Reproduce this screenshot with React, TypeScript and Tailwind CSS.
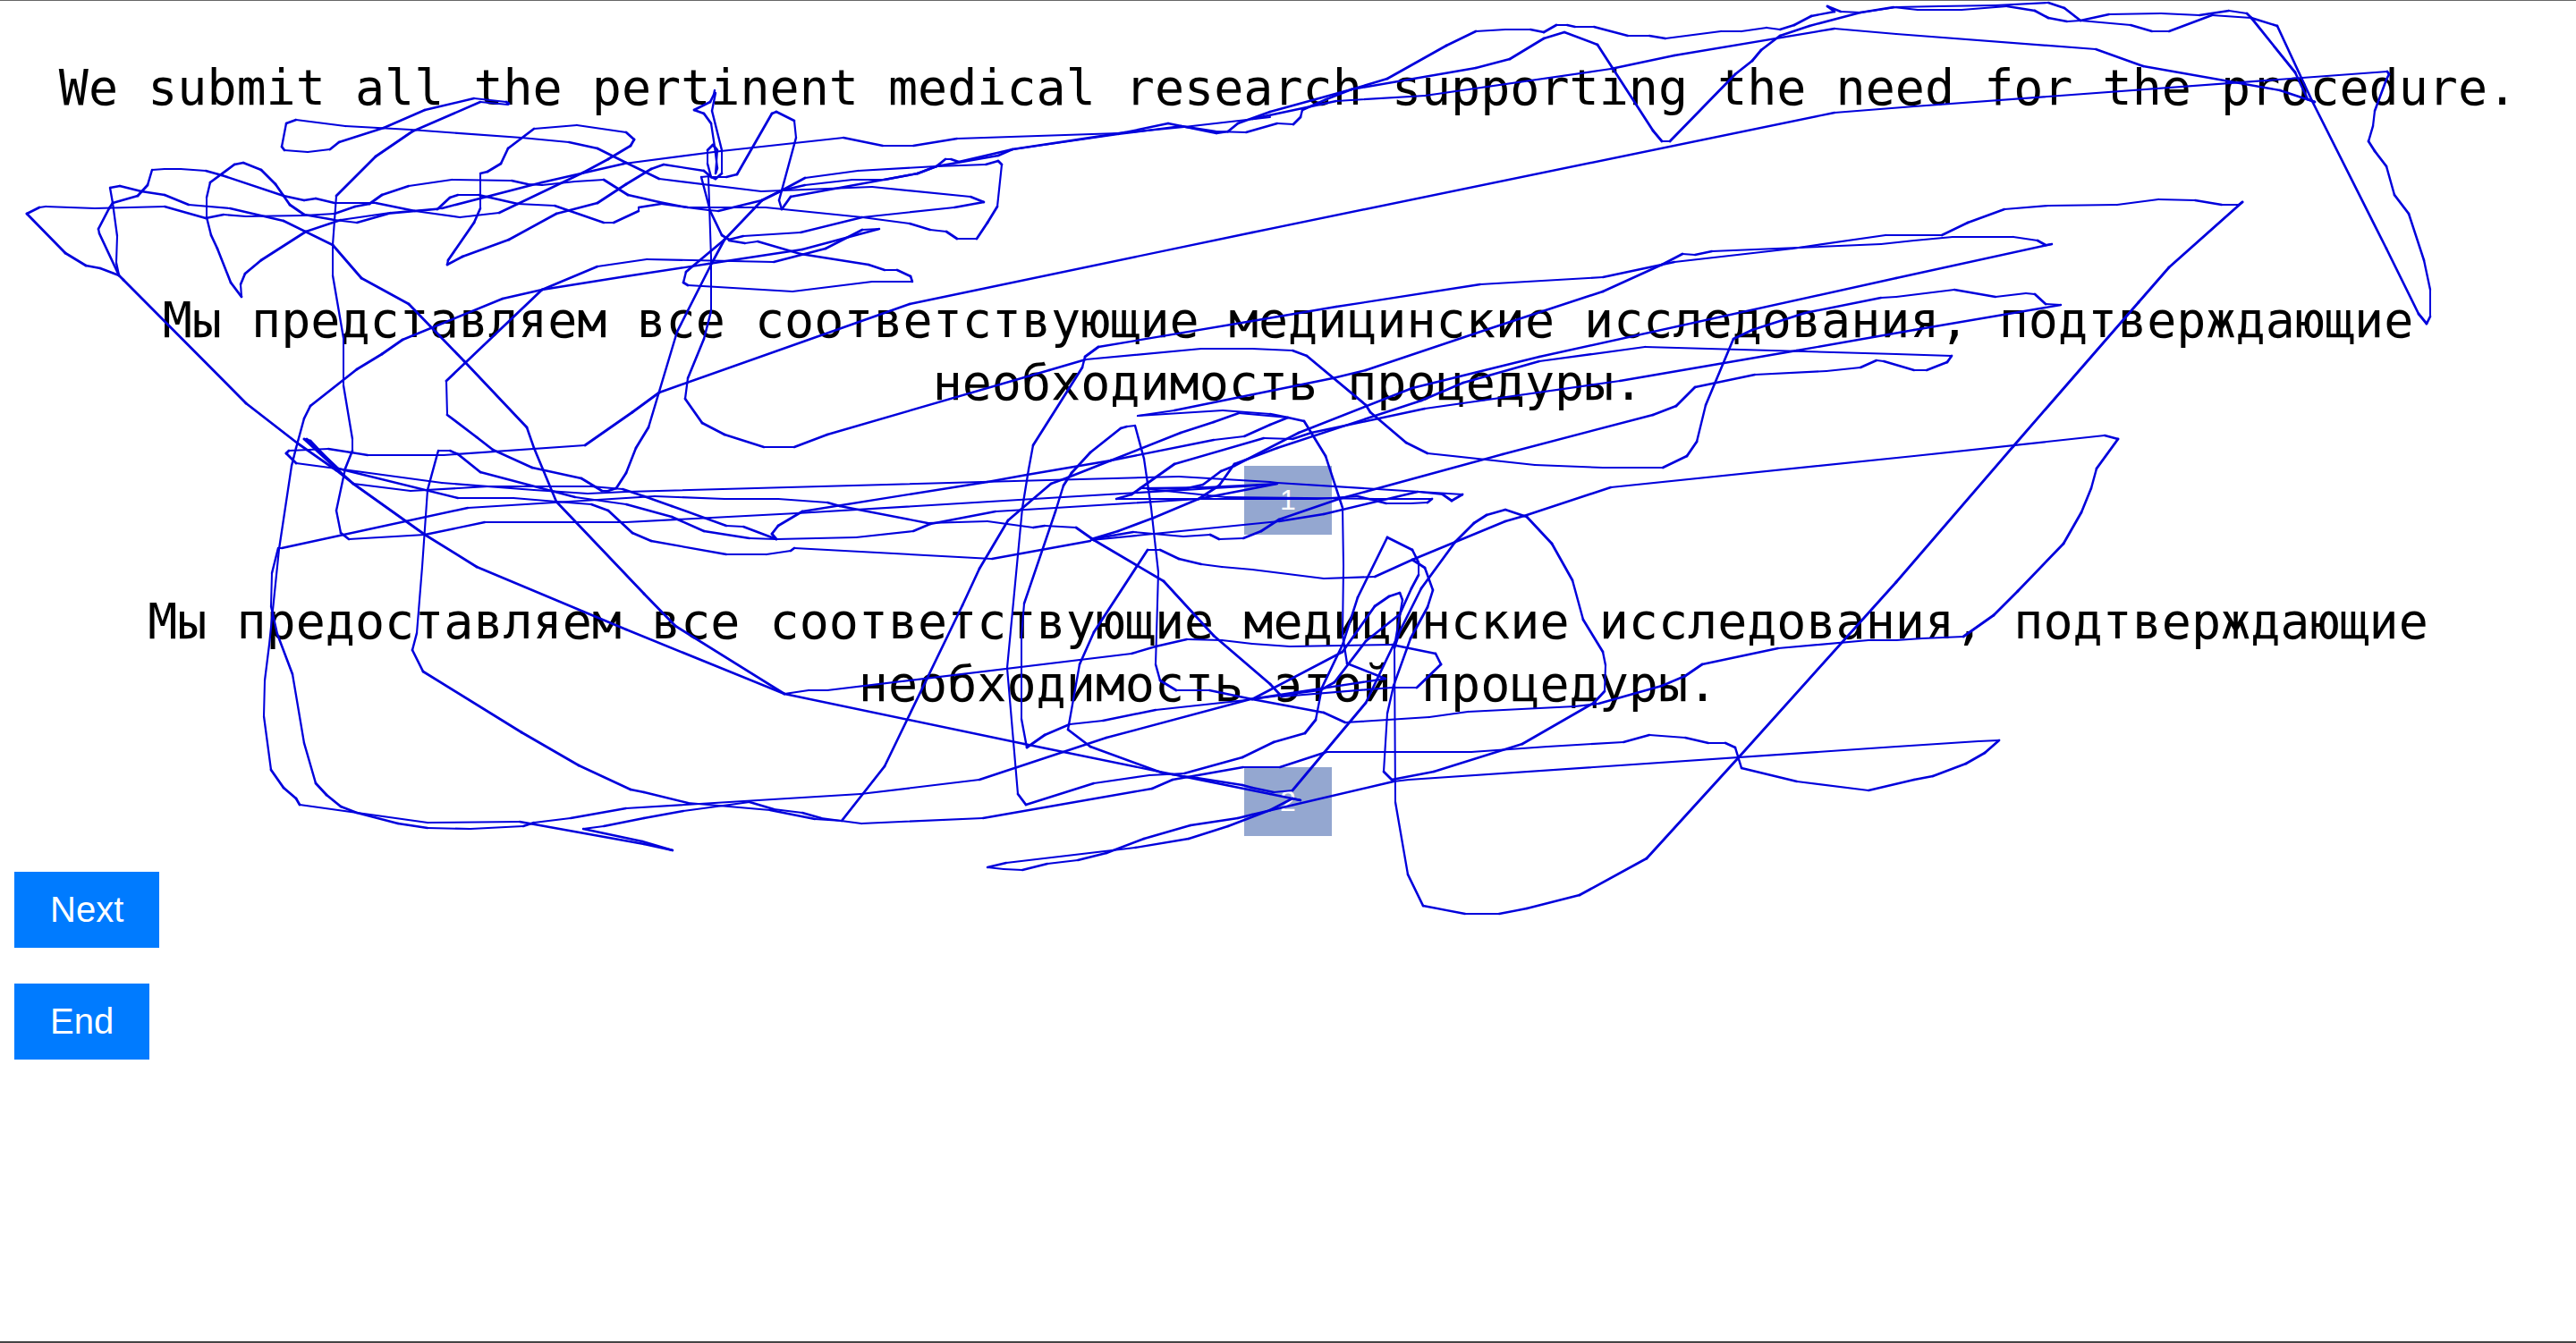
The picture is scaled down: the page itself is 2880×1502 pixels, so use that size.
const strokes: string[] = [
  "569,115 566,113 530,109 475,122 429,142 379,158 369,166 344,169 318,167 315,163 320,137 331,133 386,140 459,144 583,153 636,158 668,165 700,181 737,199 851,213 975,208 1085,219 1100,225 1067,231 964,242 895,259 831,263 815,267 807,262 794,235 784,197 794,196",
  "1047,185 1026,193 884,219 874,233 871,223 890,153 888,134 868,124 863,126 824,194 812,197 795,197 787,190 742,183 728,188 700,205 668,226 622,238 569,267 517,286 500,295 501,290 530,248 537,232 537,193 545,191 560,182 568,165 597,143 645,139 700,147 709,155 705,162 680,177 652,192 558,237 514,242 464,235 420,226 374,226 353,221 340,223 317,218 248,195 230,190 202,188 184,188 170,189 165,206 154,218 126,226 122,232 110,255 111,260 133,307 112,299 96,296 73,282 30,238 44,231 51,230 106,232 184,230 230,243 250,239 275,241 340,240 374,238 397,230 413,227 427,217 457,207 505,200 572,201 590,205 606,206 643,202 675,200 702,217 737,225 769,231 856,231 964,242 1017,249 1040,256 1058,258 1070,266 1092,266 1104,248 1115,230 1120,183 1116,179 1102,183 1047,185 959,190 900,198 874,212 852,223 810,267 767,303 764,315 769,318 886,325 975,314 1020,314 1018,308 1003,301 989,301 971,295 895,283 847,269 833,271 815,268",
  "133,307 130,293 131,263 126,226 123,209 134,207 158,213 184,217 211,228 257,232 317,246 372,273 404,310 457,339 519,403 589,477 597,500 622,560 720,663 755,699 877,775 904,771 925,771 1265,730 1292,722 1327,714 1366,715 1400,719 1442,722 1556,720 1605,730 1611,742 1584,768 1556,768 1433,778",
  "133,307 138,312 275,450 333,495 376,525 395,540 475,597 533,633 700,703 877,775 1145,831 1311,865 1420,887 1454,894",
  "340,490 347,492 376,523 395,540 459,548 546,543 661,543 696,546 720,554 751,565 812,587 831,588 868,602",
  "340,490 376,523 494,539 597,547 657,551 700,549 1134,537 1318,532 1420,538 1428,539 1635,552 1623,559 1613,552 1585,549 1480,574 1430,582 1220,603",
  "343,490 378,523 512,556 574,556 622,560 661,563 680,570 707,595 728,604 812,619 857,619 884,615 888,612 1109,624 1219,604",
  "376,523 331,517 320,506 323,503 367,501 411,508 496,508 654,497 707,460 737,438 1017,339 1400,259 2051,125 2140,118 2669,79 2671,82 2668,88 2655,123 2653,140 2648,157 2655,168 2668,185 2677,217 2693,238 2710,290 2717,323 2717,353 2713,361 2704,350 2668,277 2585,112 2546,28 2517,19 2473,16 2425,34 2406,34 2382,27 2326,22 2308,8 2290,2 2231,5 2168,6 2120,7 2080,13 2023,28 1990,39 1969,55 1959,67 1940,82 1867,157 1858,157 1848,145 1786,49 1749,35 1726,42 1688,65 1650,75 1511,99 1420,124 1384,137 1373,146 1360,148 1306,137 1258,147 1132,166 1072,180 1063,177 1057,177 1047,185",
  "1420,130 1324,141 1251,148 1070,154 1021,162 987,162 943,153 806,168 698,182 606,203 494,232 436,237 381,245 342,258 292,290 274,305 269,317 270,331 258,315 243,277 236,262 231,242 231,220 235,203 262,183 272,181 292,189 308,205 324,228 340,239 374,245 399,248 434,238 489,233 503,220 512,217 535,217 579,227 620,229 675,248 686,248 714,235 714,231 739,227 792,234 803,235 852,223 874,212 900,206 953,200 989,200 1026,193 1047,185 1116,173 1132,166 1251,149 1320,140 1359,146 1393,147 1428,137 1446,138 1454,130 1456,122 1483,110 1511,99 1551,87 1617,50 1650,34 1683,32 1711,32 1726,35 1740,27 1752,27 1761,29 1782,29 1820,39 1844,39 1862,42 1924,34 1947,34 1975,30 1990,32 2006,27 2025,17 2051,12 2043,6 2058,12 2080,13 2117,7 2144,10 2193,10 2244,6 2275,11 2290,19 2311,23 2326,22 2358,15 2416,14 2459,16 2492,11 2512,14 2517,19 2566,80 2580,110 2588,113 2549,100 2396,73 2343,54 2120,37 2051,31 1872,61 1801,76 1593,106 1494,112 1400,132",
  "568,116 537,113 461,146 420,174 376,218 372,273 372,307 384,377 384,430 394,490 394,503 386,523 376,570 381,595 390,602 475,597 542,583 700,583 891,573 1205,554 1391,543 1428,540",
  "868,602 863,596 870,587 897,571 1104,538 1148,530 1242,514 1357,491 1391,487 1420,474 1440,466 1420,462 1367,458 1272,464 1313,458 1490,422 1527,413 1664,367 1792,325 1858,295 1881,283 1895,284 1914,280 2103,272 2140,268 2183,264 2251,264 2278,268 2287,273 2294,272 2120,310 1721,398 1579,433 1452,483 1380,520 1365,526 1345,541 1323,546 1275,545 1313,518 1413,489 1445,490 1466,483 1593,456 1811,425 2009,391 2140,368 2304,340 2287,339 2275,328 2265,327 2231,331 2185,323 2120,331 2103,332 2018,349 1959,368 1938,378 1907,452 1897,493 1886,509 1859,522 1792,522 1716,519 1596,506 1572,494 1532,460 1527,452 1461,397 1445,391 1400,389 1343,389 1214,401 1173,413 925,485 888,499 854,499 810,485 785,472 766,445 769,422 787,378 795,347 795,287 792,197",
  "1248,557 1472,557 1518,554 1550,562 1577,562 1596,561 1601,557 1538,557 1370,555 1313,549 1283,546",
  "1248,557 1265,552 1275,545 1347,544 1428,540 1340,557 1180,567 1113,571 1040,585 1021,593 957,600 868,602 838,601 787,593 751,577 700,563 643,555 537,527 512,507 503,503 490,503 478,547 472,633 466,707 461,726 473,750 583,818 647,855 705,882 720,885 769,897 861,905 911,915 941,917 989,856 1076,676 1095,635 1127,581 1175,540 1194,533 1242,514 1320,483 1357,471 1385,461 1440,466 1458,470 1482,509 1501,567 1502,632 1501,709 1506,741 1549,758 1398,781 1237,824 1095,871 962,887 700,903 638,914 597,919 585,923 526,926 478,925 445,920 399,908 381,901 365,888 353,875 340,830 327,753 310,708 303,677 304,640 311,612 315,612 523,567 700,556 732,554 810,557 870,557 925,561 939,565 1037,584 1104,582 1155,589 1168,587 1203,589 1223,603 1301,649 1357,710 1420,764 1433,778",
  "1220,602 1267,594 1323,599 1353,597 1363,602 1390,601 1410,593 1430,580 1497,557 1680,507 1848,463 1874,453 1895,432 1962,418 2042,414 2080,410 2098,402 2106,403 2140,413 2154,413 2177,404 2182,397 2120,395 1839,387 1721,403 1636,427 1589,447 1428,500 1380,518 1363,542 1340,557 1290,578 1250,593 1220,602",
  "810,267 796,293 757,370 725,477 711,500 700,528 689,545 680,548 673,548 650,534 595,522 551,502 533,488 500,463 499,425 606,323 668,297 723,289 865,292 923,277 964,256 983,255 897,278 792,294 700,308 606,323 562,333 450,379 427,395 399,412 347,453 340,467 331,500 326,520 312,613 301,720 296,760 295,800 303,860 317,880 331,892 335,899 478,919 581,918 720,943 752,950 718,940 652,926 675,923 720,914 764,906 838,896 865,904 897,908 918,914 963,920 1099,914 1288,881 1311,871 1390,857 1431,857 1483,840 1645,840 1730,834 1815,829 1844,821 1884,824 1910,830 1929,830 1940,835 1947,858 2009,873 2089,883 2140,871 2161,867 2198,853 2219,841 2235,827 2212,828 2120,834 1575,871 1558,873 1400,910 1384,914 1331,922 1279,937 1237,953 1205,961 1171,965 1143,972 1122,971 1104,969 1125,964 1269,947 1329,937 1373,923 1420,905 1445,892 1454,894",
  "1400,358 1228,387 1213,398 1210,410 1155,497 1150,524 1143,567 1126,746 1138,887 1147,899 1223,875 1285,866 1324,864 1389,846 1424,829 1459,819 1471,804 1478,768 1501,720 1518,667 1551,600 1579,614 1586,628 1586,642 1578,657 1565,686 1527,716 1492,762 1476,771 1400,781",
  "1400,358 1494,342 1655,317 1792,309 1872,292 2004,277 2108,262 2171,262 2200,248 2241,233 2290,229 2367,228 2413,222 2454,223 2484,228 2503,228 2507,225 2425,298 2391,337 2251,498 2120,650 1943,847 1841,959 1766,1000 1707,1015 1676,1021 1638,1021 1591,1012 1574,977 1560,896 1559,724 1565,705 1589,657 1627,605 1648,584 1662,575 1683,569 1707,577 1735,607 1758,648 1770,692 1792,728 1795,743 1794,772 1782,785 1702,831 1603,862 1556,871 1547,862 1551,797 1558,766 1577,713 1596,678 1602,659 1593,634 1579,625 1683,582 1704,576 1801,544 2140,509 2353,486 2368,490 2344,523 2338,545 2327,572 2307,607 2256,660 2229,687 2195,711 2149,713 2120,715 2089,715 1988,724 1903,742 1884,755 1858,766 1787,786 1761,789 1641,795 1598,801 1504,807 1480,796 1400,781 1501,728 1537,677 1553,666 1565,662 1568,670 1560,716 1527,785 1445,883 1424,885 1400,880 1389,877 1338,869 1301,864 1219,834 1194,815 1207,742 1223,706 1283,614 1297,614 1318,624 1343,630 1366,633 1400,636 1480,646 1537,644 1579,625",
  "1400,781 1352,771 1315,771 1297,760 1292,742 1295,639 1287,567 1279,512 1269,475 1260,476 1253,478 1219,505 1198,528 1189,542 1180,571 1145,674 1142,710 1142,803 1148,835 1168,821 1196,809 1233,805 1292,793 1393,782",
  "799,100 798,105 794,113 776,122 787,126 795,137 799,163 802,187 800,193 802,167 797,161 791,167 791,182 795,197 800,199 807,193 807,167 796,123 800,103",
];

type Segment = { x1: number; y1: number; x2: number; y2: number; width: number };

// The pen has a square 2px nib, so slanted segments come out broader.
function toSegments(points: string): Segment[] {
  const pts = points.split(" ").map((p) => p.split(",").map(Number));
  return pts.slice(1).map(([x2, y2], i) => {
    const [x1, y1] = pts[i];
    const dx = Math.abs(x2 - x1);
    const dy = Math.abs(y2 - y1);
    return { x1, y1, x2, y2, width: (2 * (dx + dy)) / Math.hypot(dx, dy) };
  });
}

const segments = strokes.flatMap(toSegments);

function Scribble() {
  return (
    <svg
      viewBox="0 0 2880 1502"
      className="pointer-events-none absolute inset-x-0 top-0 w-full"
      stroke="#0000dc"
      strokeLinecap="round"
      aria-hidden="true"
    >
      {segments.map(({ width, ...ends }, i) => (
        <line key={i} {...ends} strokeWidth={width} />
      ))}
    </svg>
  );
}

function Choice({ text, label }: { text: string; label: string }) {
  return (
    <section className="flex flex-col items-center gap-[58px]">
      <p>{text}</p>
      <button
        type="button"
        className="bg-[#94a7d0] px-10 py-5 font-['Liberation_Sans',Arial,sans-serif] text-[32px] leading-[37px] text-white"
      >
        {label}
      </button>
    </section>
  );
}

function ActionButton({ children }: { children: string }) {
  return (
    <button
      type="button"
      className="bg-[#007bff] px-10 py-5 font-['Liberation_Sans',Arial,sans-serif] text-[40px] leading-[45px] text-white"
    >
      {children}
    </button>
  );
}

export default function App() {
  return (
    <div className="relative min-h-screen border-t border-b-2 border-t-[#666666] border-b-[#444444] bg-white px-4 pt-[62px] text-black">
      <main className="text-center font-['DejaVu_Sans_Mono',Consolas,monospace] text-[55px] leading-[70px]">
        <p className="mb-[190px]">
          We submit all the pertinent medical research supporting the need for the procedure.
        </p>
        <div className="flex flex-col gap-[62px]">
          <Choice
            text="Мы представляем все соответствующие медицинские исследования, подтверждающие необходимость процедуры."
            label="1"
          />
          <Choice
            text="Мы предоставляем все соответствующие медицинские исследования, подтверждающие необходимость этой процедуры."
            label="2"
          />
        </div>
      </main>
      <div className="mt-10 flex flex-col items-start gap-10">
        <ActionButton>Next</ActionButton>
        <ActionButton>End</ActionButton>
      </div>
      <Scribble />
    </div>
  );
}
